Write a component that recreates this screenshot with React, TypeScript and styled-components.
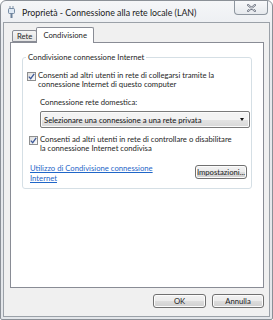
import * as React from 'react';
import styled, { createGlobalStyle } from 'styled-components';

const GlobalStyle = createGlobalStyle`
  * { box-sizing: border-box; }
  html, body { margin: 0; padding: 0; background: #ffffff; }
  body {
    font-family: Lato, "Liberation Sans", sans-serif;
    font-size: 7.7px;
    color: #262626;
  }
`;

const Window = styled.div`
  width: 273px;
  height: 320px;
  display: flex;
  flex-direction: column;
  border: 1px solid #8b9097;
  border-radius: 6px 6px 2px 2px;
  background: linear-gradient(#f5f6f8, #e7eaee 40px, #e3e6ea);
  overflow: hidden;
`;

const TitleBar = styled.div`
  height: 21px;
  display: flex;
  align-items: flex-start;
  padding-left: 7px;
  flex-shrink: 0;
`;

const TitleIcon = styled.div`
  width: 7px;
  height: 12px;
  margin-top: 5px;
  display: flex;
`;

const TitleText = styled.span`
  margin-left: 7px;
  margin-top: 7px;
  font-size: 8.8px;
  line-height: 10px;
  color: #1a1a1a;
  white-space: nowrap;
`;

const CloseButton = styled.div`
  margin-left: auto;
  margin-right: 4px;
  width: 34px;
  height: 14px;
  border: 1px solid #8e969f;
  border-top: none;
  border-radius: 0 0 4px 4px;
  background: linear-gradient(#f8f9fb, #e6e9ed);
  display: flex;
  align-items: center;
  justify-content: center;
`;

const Client = styled.div`
  flex: 1;
  margin: 0 2px 2px 2px;
  background: #f0f0f0;
  border: 1px solid #9ba1a8;
  display: flex;
  flex-direction: column;
  padding: 4px 5px 0 6px;
`;

const TabRow = styled.div`
  display: flex;
  align-items: flex-end;
  height: 15px;
  padding-left: 2px;
  position: relative;
  z-index: 1;
`;

const Tab = styled.div<{ $active?: boolean }>`
  height: ${p => (p.$active ? '16px' : '12px')};
  margin-bottom: ${p => (p.$active ? '-1px' : '0')};
  margin-right: ${p => (p.$active ? '0' : '-1px')};
  padding: 0 ${p => (p.$active ? '6px' : '4px')};
  display: flex;
  align-items: center;
  border: 1px solid #898c95;
  border-bottom: ${p => (p.$active ? 'none' : '1px solid #898c95')};
  border-radius: 2px 2px 0 0;
  background: ${p => (p.$active ? '#ffffff' : 'linear-gradient(#f4f4f4, #e4e4e4)')};
  line-height: 9px;
`;

const Panel = styled.div`
  flex: 1;
  background: #ffffff;
  border: 1px solid #898c95;
  padding: 10px 11px 0 11px;
`;

const Group = styled.fieldset`
  margin: 0;
  padding: 9px 1px 5px 3px;
  border: 1px solid #d5dfe5;
  border-radius: 3px;
  min-width: 0;
`;

const Legend = styled.legend`
  padding: 0 2px;
  margin: 0;
  line-height: 9px;
`;

const CheckRow = styled.div<{ $shift?: number }>`
  display: flex;
  align-items: flex-start;
  gap: 2px;
  padding-left: ${p => p.$shift ?? 0}px;
`;

const Box = styled.div`
  width: 9px;
  height: 9px;
  margin-top: 1px;
  margin-left: 1px;
  flex-shrink: 0;
  border: 1px solid #8e8f8f;
  background: linear-gradient(135deg, #dedede, #fbfbfb);
  display: flex;
  align-items: center;
  justify-content: center;
`;

const Label = styled.div`
  line-height: 9px;
  white-space: nowrap;
`;

const Indented = styled.div`
  padding-left: 14px;
  padding-top: 9px;
`;

const FieldLabel = styled.div`
  line-height: 9px;
  margin-bottom: 4px;
`;

const Select = styled.div`
  height: 17px;
  display: flex;
  align-items: center;
  padding: 0 5px 0 3px;
  border: 1px solid #7a7a7a;
  border-radius: 2px;
  background: linear-gradient(#f3f3f3 50%, #e4e4e4 50%, #d8d8d8);
  box-shadow: inset 0 0 0 1px #fbfbfb;
  margin-bottom: 7px;
  color: #111111;
`;

const SelectText = styled.span`
  flex: 1;
  white-space: nowrap;
`;

const Arrow = styled.span`
  width: 0;
  height: 0;
  border-left: 2.5px solid transparent;
  border-right: 2.5px solid transparent;
  border-top: 3px solid #111111;
`;

const LinkRow = styled.div`
  display: flex;
  align-items: flex-start;
  justify-content: space-between;
  margin-top: 10px;
  padding: 0 3px 0 4px;
`;

const Link = styled.a`
  color: #1f66c8;
  text-decoration: underline;
  line-height: 10px;
  width: 130px;
`;

const Button = styled.div<{ $width: number; $top?: number }>`
  width: ${p => p.$width}px;
  height: 14px;
  margin-top: ${p => p.$top ?? 0}px;
  display: flex;
  align-items: center;
  justify-content: center;
  border: 1px solid #707070;
  border-radius: 3px;
  background: linear-gradient(#f2f2f2 0%, #ebebeb 50%, #dddddd 51%, #cfcfcf 100%);
  box-shadow: inset 0 0 0 1px #fcfcfc;
  color: #1e1e1e;
  flex-shrink: 0;
`;

const Footer = styled.div`
  display: flex;
  justify-content: flex-end;
  gap: 6px;
  padding: 6px 0 8px;
`;

const Check = () => (
  <svg width="7" height="7" viewBox="0 0 7 7">
    <path d="M0.8 3.6 L2.7 5.7 L6.2 0.9" fill="none" stroke="#3e5a9a" strokeWidth="1.3" />
  </svg>
);

const PlugIcon = () => (
  <svg width="7" height="12" viewBox="0 0 7 12">
    <rect x="1.5" y="0" width="1" height="3" fill="#7f8fa4" />
    <rect x="4.5" y="0" width="1" height="3" fill="#7f8fa4" />
    <rect x="0.5" y="2.5" width="6" height="5" rx="1" fill="#dfe9f4" stroke="#5b7391" strokeWidth="0.8" />
    <rect x="2.5" y="7.5" width="2" height="4.5" fill="#6b8099" />
  </svg>
);

const CloseGlyph = () => (
  <svg width="9" height="8" viewBox="0 0 9 8">
    <path d="M1 1 L8 7 M8 1 L1 7" stroke="#707784" strokeWidth="2.2" strokeLinecap="round" />
    <path d="M1 1 L8 7 M8 1 L1 7" stroke="#eceef1" strokeWidth="0.8" strokeLinecap="round" />
  </svg>
);

const App = (): React.ReactElement => (
  <>
    <GlobalStyle />
    <Window>
      <TitleBar>
        <TitleIcon>
          <PlugIcon />
        </TitleIcon>
        <TitleText>Proprietà - Connessione alla rete locale (LAN)</TitleText>
        <CloseButton>
          <CloseGlyph />
        </CloseButton>
      </TitleBar>
      <Client>
        <TabRow>
          <Tab>Rete</Tab>
          <Tab $active>Condivisione</Tab>
        </TabRow>
        <Panel>
          <Group>
            <Legend>Condivisione connessione Internet</Legend>
            <CheckRow>
              <Box>
                <Check />
              </Box>
              <Label>
                Consenti ad altri utenti in rete di collegarsi tramite la
                <br />
                connessione Internet di questo computer
              </Label>
            </CheckRow>
            <Indented>
              <FieldLabel>Connessione rete domestica:</FieldLabel>
              <Select>
                <SelectText>Selezionare una connessione a una rete privata</SelectText>
                <Arrow />
              </Select>
            </Indented>
            <CheckRow $shift={2}>
              <Box>
                <Check />
              </Box>
              <Label>
                Consenti ad altri utenti in rete di controllare o disabilitare
                <br />
                la connessione Internet condivisa
              </Label>
            </CheckRow>
            <LinkRow>
              <Link href="#">Utilizzo di Condivisione connessione Internet</Link>
              <Button $width={52} $top={2}>
                Impostazioni...
              </Button>
            </LinkRow>
          </Group>
        </Panel>
        <Footer>
          <Button $width={53}>OK</Button>
          <Button $width={52}>Annulla</Button>
        </Footer>
      </Client>
    </Window>
  </>
);

export default App;
